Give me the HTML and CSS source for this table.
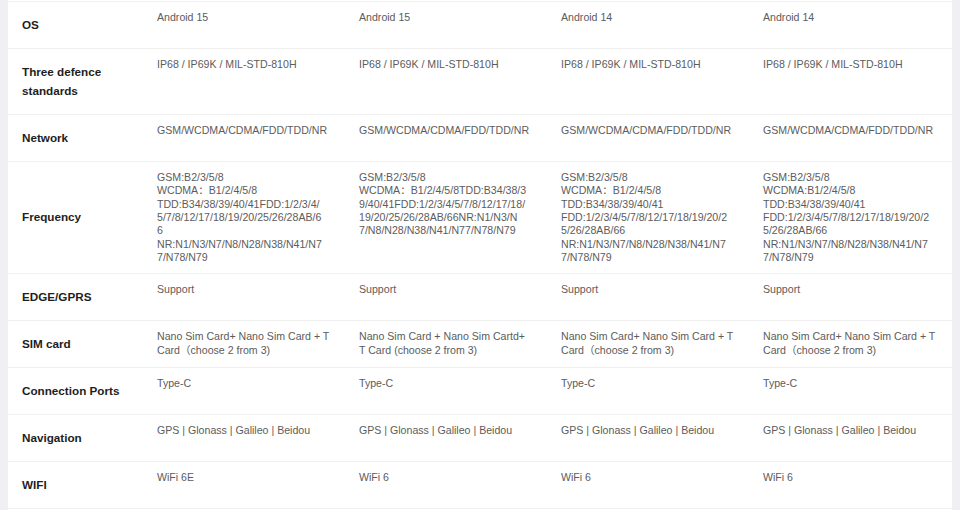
FILE: index.html
```html
<!DOCTYPE html>
<html lang="en">
<head>
<meta charset="utf-8">
<title>Specifications</title>
<link rel="stylesheet" href="styles.css">
</head>
<body>
<div class="panel">
<table class="spec">
<colgroup><col class="c-label"><col class="c-val"><col class="c-val"><col class="c-val"><col class="c-val"></colgroup>
<tbody>
<tr><th>OS</th><td>Android 15</td><td>Android 15</td><td>Android 14</td><td>Android 14</td></tr>
<tr><th>Three defence<br>standards</th><td>IP68 / IP69K / MIL-STD-810H</td><td>IP68 / IP69K / MIL-STD-810H</td><td>IP68 / IP69K / MIL-STD-810H</td><td>IP68 / IP69K / MIL-STD-810H</td></tr>
<tr><th>Network</th><td>GSM/WCDMA/CDMA/FDD/TDD/NR</td><td>GSM/WCDMA/CDMA/FDD/TDD/NR</td><td>GSM/WCDMA/CDMA/FDD/TDD/NR</td><td>GSM/WCDMA/CDMA/FDD/TDD/NR</td></tr>
<tr class="tall"><th>Frequency</th>
<td>GSM:B2/3/5/8<br>WCDMA：B1/2/4/5/8<br>TDD:B34/38/39/40/41FDD:1/2/3/4/<br>5/7/8/12/17/18/19/20/25/26/28AB/6<br>6<br>NR:N1/N3/N7/N8/N28/N38/N41/N7<br>7/N78/N79</td>
<td>GSM:B2/3/5/8<br>WCDMA：B1/2/4/5/8TDD:B34/38/3<br>9/40/41FDD:1/2/3/4/5/7/8/12/17/18/<br>19/20/25/26/28AB/66NR:N1/N3/N<br>7/N8/N28/N38/N41/N77/N78/N79</td>
<td>GSM:B2/3/5/8<br>WCDMA：B1/2/4/5/8<br>TDD:B34/38/39/40/41<br>FDD:1/2/3/4/5/7/8/12/17/18/19/20/2<br>5/26/28AB/66<br>NR:N1/N3/N7/N8/N28/N38/N41/N7<br>7/N78/N79</td>
<td>GSM:B2/3/5/8<br>WCDMA:B1/2/4/5/8<br>TDD:B34/38/39/40/41<br>FDD:1/2/3/4/5/7/8/12/17/18/19/20/2<br>5/26/28AB/66<br>NR:N1/N3/N7/N8/N28/N38/N41/N7<br>7/N78/N79</td></tr>
<tr><th>EDGE/GPRS</th><td>Support</td><td>Support</td><td>Support</td><td>Support</td></tr>
<tr><th>SIM card</th><td>Nano Sim Card+ Nano Sim Card + T<br>Card（choose 2 from 3)</td><td>Nano Sim Card + Nano Sim Cartd+<br>T Card (choose 2 from 3)</td><td>Nano Sim Card+ Nano Sim Card + T<br>Card（choose 2 from 3)</td><td>Nano Sim Card+ Nano Sim Card + T<br>Card（choose 2 from 3)</td></tr>
<tr><th>Connection Ports</th><td>Type-C</td><td>Type-C</td><td>Type-C</td><td>Type-C</td></tr>
<tr><th>Navigation</th><td>GPS | Glonass | Galileo | Beidou</td><td>GPS | Glonass | Galileo | Beidou</td><td>GPS | Glonass | Galileo | Beidou</td><td>GPS | Glonass | Galileo | Beidou</td></tr>
<tr><th>WIFI</th><td>WiFi 6E</td><td>WiFi 6</td><td>WiFi 6</td><td>WiFi 6</td></tr>
</tbody>
</table>
</div>
</body>
</html>
```
FILE: styles.css
```css
html, body {
  margin: 0;
  padding: 0;
  background: #f0f0f2;
  height: 100%;
  overflow: hidden;
}
body {
  padding: 0 8px;
  font-family: "Liberation Sans", Arial, "Noto Sans CJK SC", sans-serif;
}
.panel {
  background: #ffffff;
  padding-top: 1px;
  min-height: 520px;
}
.spec {
  width: 944px;
  table-layout: fixed;
  border-collapse: collapse;
}
.c-label { width: 136px; }
.c-val { width: 202px; }
.spec tr {
  border-top: 1px solid #f0f0f0;
  border-bottom: 1px solid #f0f0f0;
}
.spec th {
  text-align: left;
  vertical-align: middle;
  font-weight: bold;
  font-size: 11.7px;
  line-height: 19px;
  color: #1e1e1e;
  padding: 12.5px 6px 14.5px 14px;
}
.spec td {
  vertical-align: top;
  font-size: 10.6px;
  line-height: 13.33px;
  color: #5c5c5c;
  padding: 9px 4px 9px 13px;
  white-space: nowrap;
}
```
